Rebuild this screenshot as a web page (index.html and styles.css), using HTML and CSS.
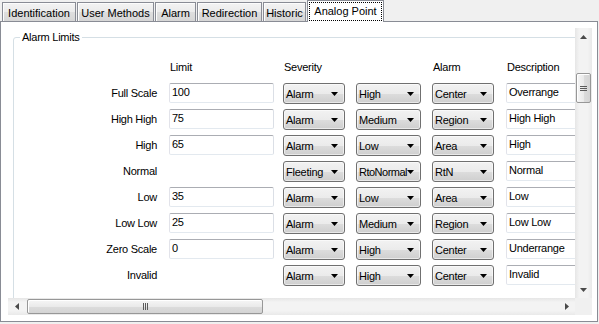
FILE: index.html
```html
<!DOCTYPE html>
<html>
<head>
<meta charset="utf-8">
<title>Analog Point</title>
<link rel="stylesheet" href="styles.css">
</head>
<body>
<div class="tabs">
  <div class="tab w1">Identification</div>
  <div class="tab w2">User Methods</div>
  <div class="tab w3">Alarm</div>
  <div class="tab w4">Redirection</div>
  <div class="tab w5">Historic</div>
  <div class="tab sel"><span class="focus">Analog Point</span></div>
</div>
<div class="panel">
  <div class="scroller">
    <div class="viewport">
      <fieldset class="group">
        <legend>Alarm Limits</legend>
        <div class="grid">
          <div></div><div class="hdr">Limit</div><div class="hdr">Severity</div><div></div><div class="hdr">Alarm</div><div class="hdr">Description</div>

          <div class="lbl">Full Scale</div><div><div class="tb lim">100</div></div>
          <div><div class="cb k1"><span>Alarm</span><svg class="arr" width="7" height="4"><polygon points="0,0 7,0 3.5,4"/></svg></div></div>
          <div><div class="cb k2"><span>High</span><svg class="arr" width="7" height="4"><polygon points="0,0 7,0 3.5,4"/></svg></div></div>
          <div><div class="cb k3"><span>Center</span><svg class="arr" width="7" height="4"><polygon points="0,0 7,0 3.5,4"/></svg></div></div>
          <div><div class="tb desc">Overrange</div></div>

          <div class="lbl">High High</div><div><div class="tb lim">75</div></div>
          <div><div class="cb k1"><span>Alarm</span><svg class="arr" width="7" height="4"><polygon points="0,0 7,0 3.5,4"/></svg></div></div>
          <div><div class="cb k2"><span>Medium</span><svg class="arr" width="7" height="4"><polygon points="0,0 7,0 3.5,4"/></svg></div></div>
          <div><div class="cb k3"><span>Region</span><svg class="arr" width="7" height="4"><polygon points="0,0 7,0 3.5,4"/></svg></div></div>
          <div><div class="tb desc">High High</div></div>

          <div class="lbl">High</div><div><div class="tb lim">65</div></div>
          <div><div class="cb k1"><span>Alarm</span><svg class="arr" width="7" height="4"><polygon points="0,0 7,0 3.5,4"/></svg></div></div>
          <div><div class="cb k2"><span>Low</span><svg class="arr" width="7" height="4"><polygon points="0,0 7,0 3.5,4"/></svg></div></div>
          <div><div class="cb k3"><span>Area</span><svg class="arr" width="7" height="4"><polygon points="0,0 7,0 3.5,4"/></svg></div></div>
          <div><div class="tb desc">High</div></div>

          <div class="lbl">Normal</div><div></div>
          <div><div class="cb k1"><span>Fleeting</span><svg class="arr" width="7" height="4"><polygon points="0,0 7,0 3.5,4"/></svg></div></div>
          <div><div class="cb k2"><span class="tight">RtoNormal</span><svg class="arr" width="7" height="4"><polygon points="0,0 7,0 3.5,4"/></svg></div></div>
          <div><div class="cb k3"><span>RtN</span><svg class="arr" width="7" height="4"><polygon points="0,0 7,0 3.5,4"/></svg></div></div>
          <div><div class="tb desc">Normal</div></div>

          <div class="lbl">Low</div><div><div class="tb lim">35</div></div>
          <div><div class="cb k1"><span>Alarm</span><svg class="arr" width="7" height="4"><polygon points="0,0 7,0 3.5,4"/></svg></div></div>
          <div><div class="cb k2"><span>Low</span><svg class="arr" width="7" height="4"><polygon points="0,0 7,0 3.5,4"/></svg></div></div>
          <div><div class="cb k3"><span>Area</span><svg class="arr" width="7" height="4"><polygon points="0,0 7,0 3.5,4"/></svg></div></div>
          <div><div class="tb desc">Low</div></div>

          <div class="lbl">Low Low</div><div><div class="tb lim">25</div></div>
          <div><div class="cb k1"><span>Alarm</span><svg class="arr" width="7" height="4"><polygon points="0,0 7,0 3.5,4"/></svg></div></div>
          <div><div class="cb k2"><span>Medium</span><svg class="arr" width="7" height="4"><polygon points="0,0 7,0 3.5,4"/></svg></div></div>
          <div><div class="cb k3"><span>Region</span><svg class="arr" width="7" height="4"><polygon points="0,0 7,0 3.5,4"/></svg></div></div>
          <div><div class="tb desc">Low Low</div></div>

          <div class="lbl">Zero Scale</div><div><div class="tb lim">0</div></div>
          <div><div class="cb k1"><span>Alarm</span><svg class="arr" width="7" height="4"><polygon points="0,0 7,0 3.5,4"/></svg></div></div>
          <div><div class="cb k2"><span>High</span><svg class="arr" width="7" height="4"><polygon points="0,0 7,0 3.5,4"/></svg></div></div>
          <div><div class="cb k3"><span>Center</span><svg class="arr" width="7" height="4"><polygon points="0,0 7,0 3.5,4"/></svg></div></div>
          <div><div class="tb desc">Underrange</div></div>

          <div class="lbl">Invalid</div><div></div>
          <div><div class="cb k1"><span>Alarm</span><svg class="arr" width="7" height="4"><polygon points="0,0 7,0 3.5,4"/></svg></div></div>
          <div><div class="cb k2"><span>High</span><svg class="arr" width="7" height="4"><polygon points="0,0 7,0 3.5,4"/></svg></div></div>
          <div><div class="cb k3"><span>Center</span><svg class="arr" width="7" height="4"><polygon points="0,0 7,0 3.5,4"/></svg></div></div>
          <div><div class="tb desc">Invalid</div></div>
        </div>
      </fieldset>
    </div>
    <div class="vbar">
      <div class="sbtn"><svg width="7" height="4"><polygon class="sarr" points="3.5,0 7,4 0,4"/></svg></div>
      <div class="vtrack"><div class="vthumb"><span class="grip-h"></span></div></div>
      <div class="sbtn"><svg width="7" height="4"><polygon class="sarr" points="0,0 7,0 3.5,4"/></svg></div>
    </div>
    <div class="hbar">
      <div class="sbtn hb"><svg width="4" height="7"><polygon class="sarr" points="4,0 4,7 0,3.5"/></svg></div>
      <div class="htrack"><div class="hthumb"><span class="grip-v"></span></div></div>
      <div class="sbtn hb"><svg width="4" height="7"><polygon class="sarr" points="0,0 4,3.5 0,7"/></svg></div>
    </div>
    <div class="corner"></div>
  </div>
</div>
</body>
</html>
```

FILE: styles.css
```css
html, body {
  margin: 0;
  padding: 0;
}
body {
  width: 599px;
  height: 324px;
  overflow: hidden;
  background: #f0f0f0;
  font-family: "Liberation Sans", Arial, sans-serif;
  font-size: 11px;
  color: #000;
}

/* ---- tab strip ---- */
.tabs {
  display: flex;
  align-items: flex-end;
  gap: 1px;
  height: 21px;
  padding-left: 2px;
}
.tab {
  box-sizing: border-box;
  height: 19px;
  padding-top: 1px;
  border: 1px solid #898c95;
  border-bottom: none;
  background: linear-gradient(#f3f3f3, #ebebeb 50%, #dedede 51%, #d6d6d6);
  box-shadow: inset 1px 1px 0 #fcfcfc;
  display: flex;
  align-items: center;
  justify-content: center;
  white-space: nowrap;
}
.w1 { width: 74px; }
.w2 { width: 77px; }
.w3 { width: 41px; }
.w4 { width: 65px; }
.w5 { width: 43px; }
.tab.sel {
  position: relative;
  z-index: 1;
  width: 77px;
  height: 22px;
  margin-bottom: -1px;
  padding: 1px;
  background: #fff;
  box-shadow: none;
}
.focus {
  box-sizing: border-box;
  flex: 1;
  height: 19px;
  border: 1px dotted #000;
  display: flex;
  align-items: center;
  justify-content: center;
  padding-bottom: 1px;
}

/* ---- page ---- */
.panel {
  box-sizing: border-box;
  width: 598px;
  height: 301px;
  border: 1px solid #898c95;
  background: #fff;
  padding: 6px 5px 6px 7px;
}
.scroller {
  display: grid;
  grid-template-columns: 1fr 17px;
  grid-template-rows: 1fr 17px;
  height: 100%;
}
.viewport {
  overflow: hidden;
  padding-left: 5px;
  letter-spacing: -0.25px;
}

.group {
  margin: 3px 0 0 0;
  padding: 0 0 30px 0;
  width: 700px;
  min-width: 700px;
  border: 1px solid #d5dfe5;
  border-radius: 3px;
}
.group legend {
  margin-left: 6px;
  padding: 0 2px;
  line-height: 13px;
}
.grid {
  display: grid;
  grid-template-columns: 155px 114px 73px 76px 74px 120px;
  grid-auto-rows: 26px;
  padding-top: 13px;
}
.hdr {
  padding: 4px 0 0 1px;
  line-height: 13px;
}
.lbl {
  text-align: right;
  padding-right: 12px;
  line-height: 20px;
  white-space: nowrap;
}

.tb {
  box-sizing: border-box;
  height: 20px;
  border: 1px solid;
  border-color: #abadb3 #dbdfe6 #e3e9ef #e2e3ea;
  border-radius: 2px;
  padding: 1px 0 0 2px;
  line-height: 15px;
  background: #fff;
  white-space: nowrap;
  overflow: hidden;
}
.lim { width: 105px; }
.desc { width: 100px; }

.cb {
  box-sizing: border-box;
  height: 21px;
  border: 1px solid #707070;
  border-radius: 3px;
  background: linear-gradient(#f2f2f2, #ebebeb 50%, #dddddd 51%, #cfcfcf);
  box-shadow: inset 0 0 0 1px rgba(255,255,255,0.55);
  display: flex;
  align-items: center;
  padding: 0 6px 0 2px;
  white-space: nowrap;
}
.k1 { width: 62px; }
.k2 { width: 65px; }
.k3 { width: 62px; }
.cb .arr {
  margin-left: auto;
  flex: none;
  fill: #000;
}
.tight { letter-spacing: -0.5px; }

/* ---- scrollbars ---- */
.vbar {
  display: flex;
  flex-direction: column;
  background: linear-gradient(to right, #e6e6e6, #f3f3f3 25%, #f3f3f3 75%, #e9e9e9);
}
.sbtn {
  height: 17px;
  flex: none;
  display: flex;
  align-items: center;
  justify-content: center;
}
.sarr { fill: #4a4a4a; }
.vtrack {
  flex: 1;
  padding: 0 1px;
}
.vthumb {
  box-sizing: border-box;
  margin-top: 28px;
  height: 30px;
  border: 1px solid #979797;
  border-radius: 2px;
  background: linear-gradient(to right, #f6f6f6, #eaeaea 50%, #dcdcdc 51%, #d4d4d4);
  box-shadow: inset 1px 1px 0 #fff;
  display: flex;
  align-items: center;
  justify-content: center;
}
.grip-h {
  width: 7px;
  height: 5px;
  background: repeating-linear-gradient(#5a5a5a 0 1px, transparent 1px 2px);
}
.hbar {
  display: flex;
  background: linear-gradient(#e6e6e6, #f3f3f3 25%, #f3f3f3 75%, #e9e9e9);
}
.hb { width: 17px; height: 17px; }
.htrack {
  flex: 1;
  padding: 1px 0;
}
.hthumb {
  box-sizing: border-box;
  margin-left: 2px;
  width: 236px;
  height: 15px;
  border: 1px solid #979797;
  border-radius: 2px;
  background: linear-gradient(#f6f6f6, #eaeaea 50%, #dcdcdc 51%, #d4d4d4);
  box-shadow: inset 1px 1px 0 #fff;
  display: flex;
  align-items: center;
  justify-content: center;
}
.grip-v {
  width: 5px;
  height: 7px;
  background: repeating-linear-gradient(to right, #5a5a5a 0 1px, transparent 1px 2px);
}
.corner {
  background: #f0f0f0;
}
```
